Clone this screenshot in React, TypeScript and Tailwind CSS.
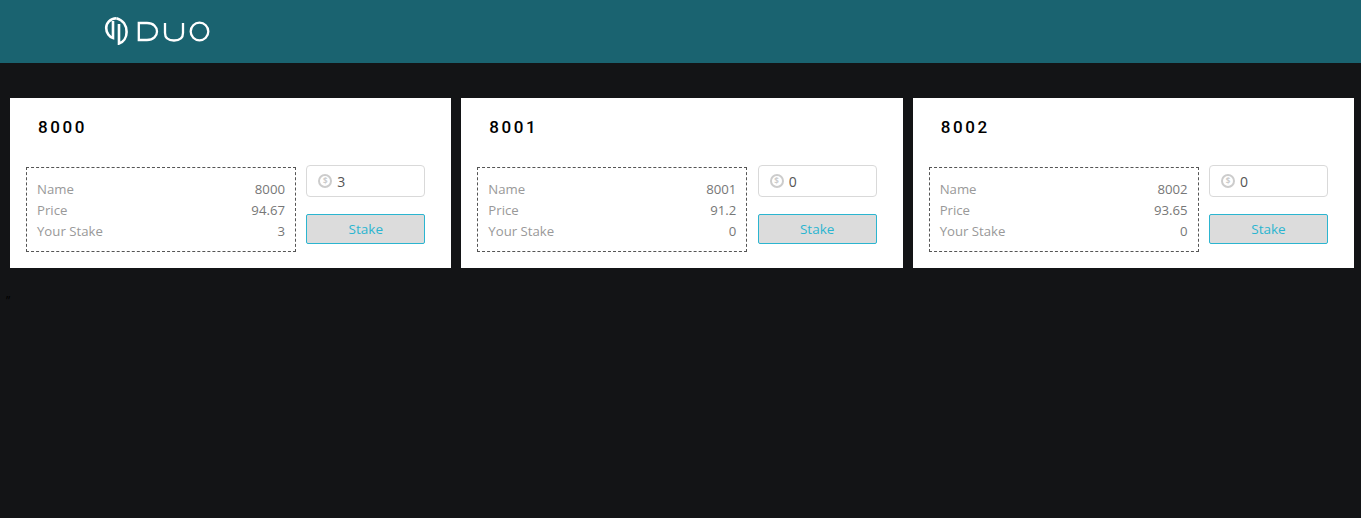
const pools = [
  { name: "8000", price: "94.67", stake: "3" },
  { name: "8001", price: "91.2", stake: "0" },
  { name: "8002", price: "93.65", stake: "0" },
];

function Logo() {
  return (
    <svg width="108" height="30" viewBox="0 0 108 30" fill="none" stroke="white" strokeWidth="2.3">
      {/* mark */}
      <path d="M12.5 3.2C6 3.5 2.2 8 2.2 13C2.2 18 5.5 22 9 23V6" strokeWidth="2.6" />
      <path d="M12.5 3.2C19 5 22.6 10.5 22.6 17C22.6 22.5 19.5 27 15 28.6V9" strokeWidth="2.6" />
      {/* letters */}
      <path d="M34.8 8V25H43C49.5 25 53 21 53 16.5C53 12 49.5 8 43 8Z" />
      <path d="M61 8V18C61 22.5 64 25.5 70 25.5C76 25.5 79 22.5 79 18V8" />
      <circle cx="95.5" cy="16.5" r="8.8" />
    </svg>
  );
}

function CoinIcon() {
  return (
    <span className="flex h-[14px] w-[14px] items-center justify-center rounded-full border-2 border-[#cccccc] text-[8px] font-bold leading-none text-[#cccccc]">
      $
    </span>
  );
}

function PoolCard({ name, price, stake }: { name: string; price: string; stake: string }) {
  return (
    <div className="h-[170px] flex-1 bg-white pt-[19px] pl-4 pr-[26px]">
      <h3 className="pl-3 font-['Roboto',sans-serif] text-[17px] leading-5 font-medium tracking-[2.6px] text-black">{name}</h3>
      <div className="mt-[31px] flex items-start gap-[10.3px]">
        <div className="mt-[-1px] flex h-[85px] w-[270px] flex-col justify-center border border-dashed border-[#555] px-[10px] pt-[2px] text-[13.2px] leading-[21px]">
          <div className="flex justify-between">
            <span className="text-[#999]">Name</span>
            <span className="text-[#777]">{name}</span>
          </div>
          <div className="flex justify-between">
            <span className="text-[#999]">Price</span>
            <span className="text-[#777]">{price}</span>
          </div>
          <div className="flex justify-between">
            <span className="text-[#999]">Your Stake</span>
            <span className="text-[#777]">{stake}</span>
          </div>
        </div>
        <div className="w-[119px]">
          <div className="mt-[-3px] flex h-8 items-center gap-[5px] rounded border border-[#d9d9d9] px-[11px] text-sm text-[#555]">
            <CoinIcon />
            <span className="pt-[2px]">{stake}</span>
          </div>
          <button className="mt-[17px] h-[30px] w-full rounded-[2px] border border-[#2bb5d0] bg-[#dcdcdc] text-[13.5px] text-[#2bb5d0]">
            Stake
          </button>
        </div>
      </div>
    </div>
  );
}

export default function App() {
  return (
    <div className="min-h-[518px] bg-[#131416] font-['Open_Sans',sans-serif]">
      <header className="flex h-[63px] items-start bg-[#1a6370] pt-[15px] pl-[104px]">
        <Logo />
      </header>
      <main className="flex gap-[10px] pt-[35px] pr-[7px] pl-[10px]">
        {pools.map((p) => (
          <PoolCard key={p.name} {...p} />
        ))}
      </main>
      <p className="mt-[25px] pl-[6px] text-xs leading-4 text-black">”</p>
    </div>
  );
}
